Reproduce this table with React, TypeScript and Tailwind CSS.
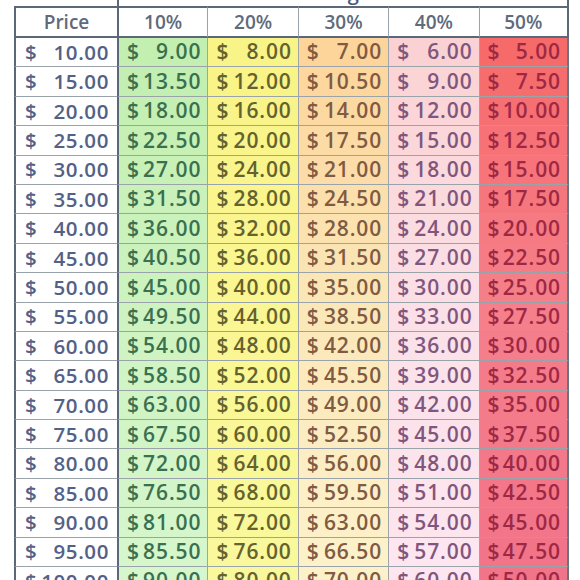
const prices = Array.from({ length: 19 }, (_, i) => 10 + i * 5);

type Col = { pct: number; stops: string[]; text: string };

const cols: Col[] = [
  { pct: 10, stops: ['#c3efb0', '#cdf3bf', '#d6f6cc'], text: '#3a7050' },
  { pct: 20, stops: ['#f9f487', '#faf692', '#f9f89c'], text: '#65622f' },
  { pct: 30, stops: ['#fdd59b', '#fbe7b8', '#fdf1ca'], text: '#805a42' },
  { pct: 40, stops: ['#fbd2d3', '#fbe0e6', '#fde6ef'], text: '#80567e' },
  { pct: 50, stops: ['#f66a6a', '#f5808b', '#f27489'], text: '#9e2844' },
];

const hex = (h: string) => [1, 3, 5].map((i) => parseInt(h.slice(i, i + 2), 16));

function shade(stops: string[], t: number) {
  const seg = t < 0.5 ? 0 : 1;
  const lt = t < 0.5 ? t * 2 : (t - 0.5) * 2;
  const a = hex(stops[seg]);
  const b = hex(stops[seg + 1]);
  const c = a.map((v, i) => Math.round(v + (b[i] - v) * lt));
  return `rgb(${c[0]}, ${c[1]}, ${c[2]})`;
}

function Money({ v }: { v: number }) {
  return (
    <>
      <span>$</span>
      <span>{v.toFixed(2)}</span>
    </>
  );
}

export default function App() {
  return (
    <div className="w-[580px] h-[580px] overflow-hidden bg-white" style={{ fontFamily: '"Open Sans", "Noto Sans", sans-serif' }}>
      <div className="mt-[-19px] ml-[14px] w-[555px] grid grid-cols-[103px_repeat(5,1fr)] font-semibold">
        {/* title row, mostly above the frame */}
        <div className="h-[25px]" />
        <div className="col-span-5 h-[25px] border-x-2 border-[#5b6878] relative overflow-hidden">
          <span className="absolute left-[52px] bottom-[3px] text-[20px] leading-none text-[#4b5a70]">Discount Percentage</span>
        </div>

        {/* header */}
        <div className="h-[32px] border-y-2 border-l-2 border-[#5b6878] flex items-center justify-center text-[19px] text-[#5f6a7a]">Price</div>
        {cols.map((c, i) => (
          <div
            key={c.pct}
            className={`h-[32px] border-y-2 border-[#5b6878] flex items-center justify-center text-[19px] text-[#5f6a7a] ${i === 0 ? 'border-l-2' : 'border-l border-l-[#9aa2aa]'} ${i === 4 ? 'border-r-2' : ''}`}
          >
            {c.pct}%
          </div>
        ))}

        {prices.map((p, r) => {
          const t = r / (prices.length - 2);
          return (
            <div key={p} className="contents">
              <div className="h-[29.4px] border-l-2 border-b border-l-[#5b6878] border-b-[#9aa2aa] flex items-center justify-between pl-[9px] pr-[8px] text-[20.5px] text-[#536186] tracking-[0.6px]">
                <Money v={p} />
              </div>
              {cols.map((c, i) => (
                <div
                  key={c.pct}
                  className={`h-[29.4px] border-b border-b-[#9aa2aa] flex items-center justify-between pl-[8px] pr-[6px] text-[21px] tracking-[0.9px] ${i === 0 ? 'border-l-2 border-l-[#5b6878]' : 'border-l border-l-[#a0a4a8]'} ${i === 4 ? 'border-r-2 border-r-[#6a7480]' : ''}`}
                  style={{ background: shade(c.stops, Math.min(t, 1)), color: c.text }}
                >
                  <Money v={(p * (100 - c.pct)) / 100} />
                </div>
              ))}
            </div>
          );
        })}
      </div>
    </div>
  );
}
